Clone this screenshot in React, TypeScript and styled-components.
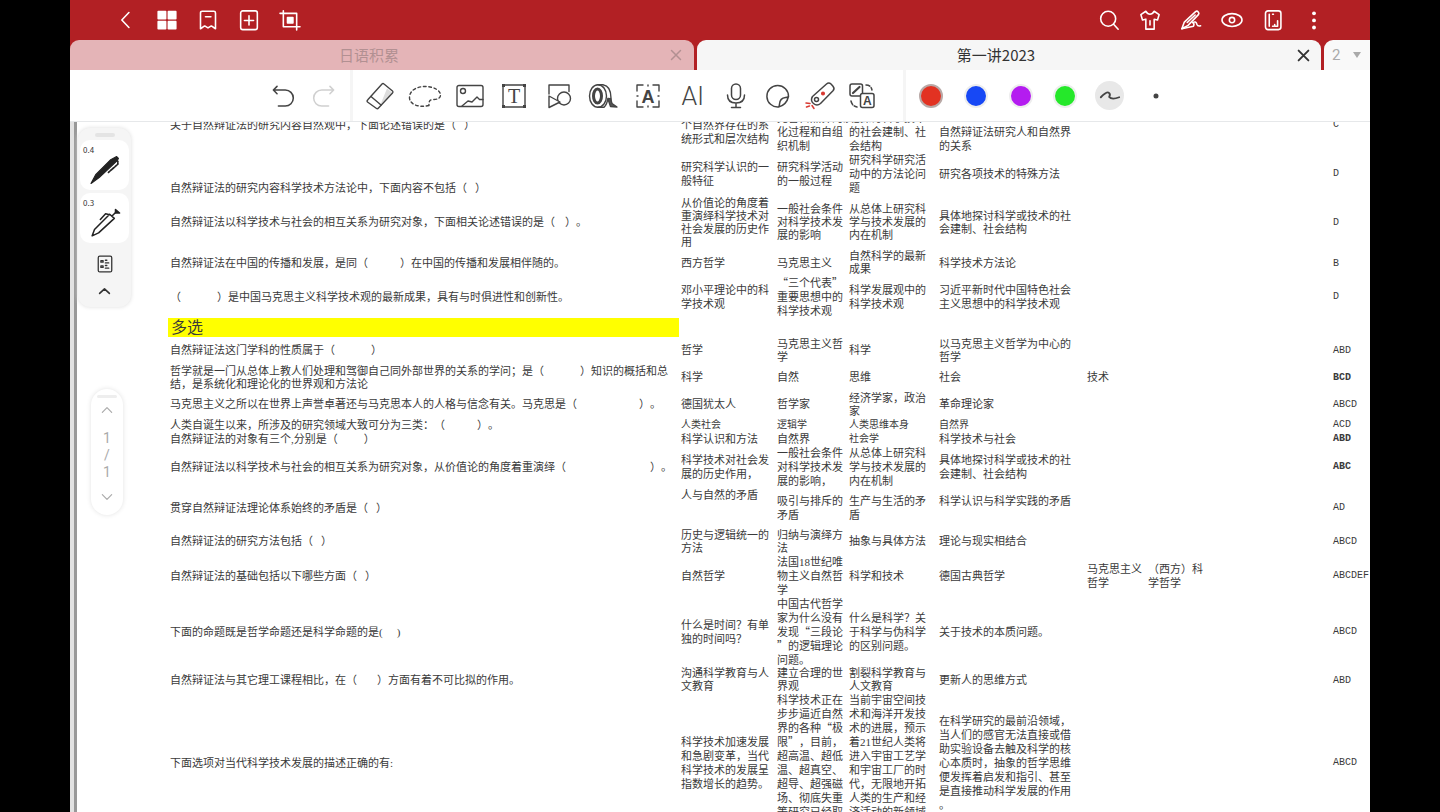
import React from "react";
import styled, { createGlobalStyle, css } from "styled-components";

const GlobalStyle = createGlobalStyle`
  *, *::before, *::after { box-sizing: border-box; }
  body {
    margin: 0;
    background: #000;
    color: #333;
    font-family: "Noto Sans CJK SC", sans-serif;
  }
  button { font: inherit; color: inherit; padding: 0; border: 0; background: none; cursor: pointer; }
  svg { display: block; overflow: visible; }
`;

/* ---------- shell ---------- */

const Shell = styled.div`
  height: 100vh;
  padding: 0 70px;
  display: flex;
  flex-direction: column;
  overflow: hidden;
`;

const IconButton = styled.button`
  display: flex;
  align-items: center;
  justify-content: center;
`;

const TopBar = styled.header`
  flex: none;
  height: 40px;
  padding: 0 36px 1px 35px;
  display: flex;
  justify-content: space-between;
  background: #b22024;
  color: #fff;
`;

const TopGroup = styled.nav`
  display: flex;
  ${IconButton} { width: 41px; }
`;

const TabBar = styled.div`
  flex: none;
  height: 30px;
  display: flex;
  gap: 3px;
  background: #b22024;
`;

const Tab = styled.div<{ $active?: boolean }>`
  flex: 1;
  display: flex;
  align-items: center;
  padding-right: 10px;
  border-radius: 9px 9px 0 0;
  background: ${(p) => (p.$active ? "#f6f6f6" : "#e4b4b7")};
  color: ${(p) => (p.$active ? "#333" : "#b29092")};
  ${IconButton} { width: 16px; height: 30px; }
`;

const TabTitle = styled.button`
  flex: 1;
  font-size: 15px;
  line-height: 30px;
`;

const TabCount = styled.button`
  width: 46px;
  padding: 0 8px;
  display: flex;
  align-items: center;
  justify-content: space-between;
  border-radius: 9px 0 0 0;
  background: #f9f9f9;
  color: #aaa;
  font-size: 15px;
  font-family: Roboto, sans-serif;
`;

const ToolBar = styled.div`
  flex: none;
  height: 52px;
  display: flex;
  background: #fff;
  border-bottom: 1px solid #e6e8ea;
  color: #444;
`;

const ToolSection = styled.div<{ $grow?: boolean }>`
  display: flex;
  padding: 0 20px 0 5px;
  border-left: 3px solid #f5f5f5;
  ${(p) => p.$grow && css`flex: 1; padding: 0 0 0 3px;`}
`;

const History = styled.div`
  width: 280px;
  padding-right: 6px;
  display: flex;
  justify-content: flex-end;
  ${IconButton} { width: 41px; }
`;

const ToolGrid = styled.div<{ $count: number; $width: number }>`
  width: ${(p) => p.$width}px;
  display: grid;
  grid-template-columns: repeat(${(p) => p.$count}, 1fr);
`;

const AiLabel = styled.span`
  padding-top: 3px;
  font-family: Roboto, sans-serif;
  font-weight: 300;
  font-size: 25px;
  line-height: 28px;
`;

const Swatch = styled.span<{ $color: string; $selected?: boolean }>`
  width: 24px;
  height: 24px;
  border-radius: 50%;
  border: 2px solid ${(p) => (p.$selected ? "#b9a9a7" : "#eee")};
  background: ${(p) => p.$color};
`;

const StrokeStyle = styled.span`
  width: 29px;
  height: 29px;
  border-radius: 50%;
  display: flex;
  align-items: center;
  justify-content: center;
  background: #e8e8e8;
`;

/* ---------- document ---------- */

const Viewport = styled.main`
  position: relative;
  flex: 1;
  min-height: 0;
  overflow: hidden;
  display: flex;
  padding-left: 4px;
  background: #e2e2e2;
`;

const Paper = styled.section`
  flex: 1;
  min-width: 0;
  padding-left: 91px;
  border-left: 3px solid #999;
  background: #fff;
`;

const Sheet = styled.table`
  width: 100%;
  margin-top: -11px;
  table-layout: fixed;
  border-collapse: collapse;
  font-family: "Liberation Serif", "Noto Sans CJK SC", serif;
  font-size: 11px;
  color: #3a3a3a;
  text-spacing-trim: space-all;
`;

const Col = styled.col<{ $width?: number }>`
  ${(p) => p.$width && css`width: ${p.$width}px;`}
`;

const Row = styled.tr<{ $height: number; $tight?: boolean }>`
  height: ${(p) => p.$height}px;
  line-height: ${(p) => (p.$tight ? 13 : 14)}px;
`;

type Align = "top" | "middle" | "bottom";

const Cell = styled.td<{ $align?: Align; $small?: boolean }>`
  padding: 0 0 0 2px;
  white-space: pre;
  vertical-align: ${(p) => p.$align ?? "middle"};
  ${(p) => p.$small && css`font-size: 10px;`}
`;

const Answer = styled(Cell)<{ $bold?: boolean }>`
  font-family: "Liberation Mono", monospace;
  font-size: 10px;
  font-weight: ${(p) => (p.$bold ? 700 : 400)};
`;

const SectionTitle = styled.th`
  padding: 0 0 0 3px;
  background: #ff0;
  text-align: left;
  font-size: 16px;
  line-height: 19px;
  font-weight: 400;
`;

const Blank = styled.span<{ $width: number }>`
  display: inline-block;
  width: ${(p) => p.$width}px;
`;

const WideQuote = styled.span`
  font-family: "Noto Sans CJK SC", sans-serif;
  line-height: 10px;
`;

/* ---------- floating panels ---------- */

const PenPanel = styled.aside`
  position: absolute;
  top: 6px;
  left: 8px;
  width: 53px;
  height: 179px;
  padding: 5px 2px 0;
  display: flex;
  flex-direction: column;
  align-items: center;
  gap: 3px;
  border-radius: 12px;
  background: #f5f5f5;
  box-shadow: 0 0 4px #ddd;
`;

const Grip = styled.span`
  flex: none;
  width: 20px;
  height: 4px;
  border-radius: 2px;
  background: #e4e4e4;
`;

const PenCard = styled.button`
  width: 49px;
  height: 50px;
  padding: 4px 3px 0;
  display: flex;
  flex-direction: column;
  border-radius: 10px;
  background: #fff;
  text-align: left;
  svg { align-self: center; }
`;

const PenSize = styled.span`
  font-size: 8px;
  line-height: 12px;
`;

const PanelButton = styled(IconButton)`
  width: 49px;
  height: 24px;
  &:first-of-type { height: 30px; }
`;

const PanelActions = styled.div`
  padding-top: 3px;
  display: flex;
  flex-direction: column;
`;

const PagePanel = styled.aside`
  position: absolute;
  top: 267px;
  left: 21px;
  width: 32px;
  height: 126px;
  padding-top: 6px;
  display: flex;
  flex-direction: column;
  align-items: center;
  border-radius: 16px;
  background: #fff;
  box-shadow: 0 0 5px #e2e2e2;
  color: #aaa;
  ${Grip} { height: 3px; background: #eee; }
  ${IconButton} { width: 32px; height: 24px; }
`;

const PageNumber = styled.span`
  padding: 8px 0 4px;
  font-family: Roboto, sans-serif;
  font-size: 14px;
  line-height: 17px;
  text-align: center;
  white-space: pre;
`;

/* ---------- icons ---------- */

function Icon({ size = 24, w = 2, children }: { size?: number; w?: number; children: React.ReactNode }) {
  return (
    <svg width={size} height={size} viewBox="0 0 24 24" fill="none" stroke="currentColor"
      strokeWidth={w} strokeLinecap="round" strokeLinejoin="round" aria-hidden="true">
      {children}
    </svg>
  );
}

const topLeft: [string, React.ReactNode][] = [
  ["返回", <path d="M15.500 3 7 12l8.500 9" />],
  ["缩略图", <g fill="currentColor" stroke="none"><rect x="0.5" y="1" width="10.800" height="10.500" rx="1" /><rect x="12.700" y="1" width="10.800" height="10.500" rx="1" /><rect x="0.5" y="13" width="10.800" height="10.500" rx="1" /><rect x="12.700" y="13" width="10.800" height="10.500" rx="1" /></g>],
  ["书签", <><path d="M3 22.500V3.500q0-2 2-2h14q2 0 2 2v19l-4.500-3.200h-1L12 21.500l-3.500-2.200h-1z" /><path d="M9 8h6.500" /></>],
  ["新建", <><rect x="2" y="1" width="20" height="22.500" rx="2.500" /><path d="M12 7v11M6.500 12.500h11" /></>],
  ["裁剪", <><path d="M4 1v19h20M0 4h20v20" /><rect x="9" y="9" width="6.500" height="6.500" fill="currentColor" /></>],
];

const topRight: [string, React.ReactNode][] = [
  ["搜索", <><circle cx="11" cy="10.500" r="9" /><path d="m17.500 17 5.500 6" /></>],
  ["主题", <><path d="m7 1.500-6 4 2 6.500 4-1v12h10V11l4 1 2-6.500-6-4q-2 3.500-5 3.500t-5-3.500z" /><path d="M12 13v5" /></>],
  ["批注", <><path d="m1 22.500 3-8L17.500 2q1.700-1.300 3.200.3t.2 3.300L8.500 18.500z" /><path d="m7.500 15 9.500-9M1 22.500l14-3q1.500-3-1-4.500 4-2 5 2 1 3 4.500 2" /></>],
  ["查看", <><ellipse cx="12" cy="12" rx="12" ry="7.700" /><circle cx="12" cy="12" r="3.200" /></>],
  ["书本", <><rect x="3" y="1" width="18.500" height="22.500" rx="3" /><path d="M7.500 5v14.500M11.500 5h1M11.500 19.500h1M17.500 13v6.500H14v-2" /></>],
  ["更多", <g fill="currentColor" stroke="none"><circle cx="12" cy="4" r="2.300" /><circle cx="12" cy="12.500" r="2.300" /><circle cx="12" cy="21" r="2.300" /></g>],
];

const letter = { fill: "currentColor", stroke: "none", textAnchor: "middle" as const };

const mainTools: [string, React.ReactNode][] = [
  ["橡皮擦", <><path d="m12.500 20.500 11.500-12-5-4z" fill="#ddd" stroke="none" /><path d="m0 15.500 14-15.500q1-1 2 0l8.500 7q1 1 0 2L10.500 24q-1 1.200-2.300.2L-.5 18q-1-1 .5-2.500z" /><path d="m3 12.500 10 8.500" /></>],
  ["套索", <path strokeDasharray="2.700 2.700" d="M16 21.500C5 24-4 20-3.500 13-3 5 6 2.500 12 2.500c9 0 15.500 4 15.500 8.500 0 3-3 4.500-6.500 4.500s-5.500 1-5 6z" />],
  ["图片", <><rect x="-1" y="1.500" width="26" height="21" rx="2" /><circle cx="5" cy="7" r="2.500" /><path d="m4 22 6-5 4 1 5-5 2.500 2.500H25" /></>],
  ["文本", <><rect x="1" y="1" width="22" height="22" /><text x="12" y="18.500" {...letter} fontFamily="Liberation Serif" fontSize="20">T</text><g fill="currentColor" stroke="none"><rect x="0" y="0" width="3" height="3" /><rect x="21" y="0" width="3" height="3" /><rect x="0" y="21" width="3" height="3" /><rect x="21" y="21" width="3" height="3" /></g></>],
  ["形状", <><path d="M2 10V1h20v6.500" /><circle cx="17" cy="14.500" r="6.500" fill="#fff" /><path d="M2 12v11.500L13 18z" fill="#fff" /></>],
  ["胶带", <><ellipse cx="7" cy="12" rx="8.500" ry="11.300" /><ellipse cx="6.500" cy="12" rx="4" ry="7" strokeWidth="3" /><path d="M7 .7h5Q20 2 20 14v4M7 23.300h6q3-3 4-9" /><path d="m17 15 2.500 7.500L26 23l-5-3.500-1.500-5z" fill="#555" /></>],
  ["识别", <><path d="M1 7V1h6M17 1h6v6M23 17v6h-6M7 23H1v-6M1 12h1M22 12h1M12 1v1M12 22v1" /><text x="12" y="18.500" {...letter} fontFamily="Liberation Sans" fontWeight="700" fontSize="18">A</text></>],
  ["AI", null],
];

const extraTools: [string, React.ReactNode][] = [
  ["录音", <><rect x="7.500" y="0" width="9" height="15.500" rx="4.500" /><path d="M3.500 11q0 8 8.500 8t8.500-8M12 19v4.500M7.500 23.500h9" /></>],
  ["贴纸", <><path d="M22.500 12.500A10.800 10.800 0 1 0 12.500 23q1-1 1-3 .5-6 6-6.500 2 0 3-1zM12.500 23q8-2 10-10.500" /></>],
  ["激光笔", <><path d="m4.500 12.500 14-12.500q2.300-2 4.500 0l2 2.300q2 2.300 0 4.500L12.500 19.500q-3.500 3-7 0t-1-7z" /><circle cx="8.500" cy="15.500" r="2" /><circle cx="15" cy="9.500" r="1.300" fill="#d93a32" stroke="#d93a32" /><path d="m-2 19 4 .5M-1.500 23l3-1M4 21.500l2 3" stroke="#d93a32" /></>],
  ["翻译", <><rect x="0" y="0" width="12.500" height="12" rx="2" /><path d="m3 9 6.500-6" strokeWidth="2.200" /><rect x="10.500" y="9.500" width="13.500" height="14" rx="2" fill="#fff" /><text x="17.300" y="20.800" {...letter} fontFamily="Liberation Sans" fontWeight="700" fontSize="12">A</text><path d="M16 1q5 0 6 5M1 17q1 5 6 6" strokeDasharray="4 2" /></>],
];

/* ---------- data ---------- */

type Option = { t: string; align?: Align; small?: boolean };
interface Question { h: number; tight?: boolean; q: string; qAlign?: Align; o: (string | Option)[]; a: string; bold?: boolean }

/* [n] inside a question is an n-pixel fill-in blank. */
const single: Question[] = [
  { h: 42, q: "关于自然辩证法的研究内容自然观中，下面论述错误的是（[8]）\n ", a: "C\n ", o: ["个自然界存在的系\n统形式和层次结构", "完善自然界的演\n化过程和自组\n织机制", "地探讨科学技术\n的社会建制、社\n会结构", { t: "自然辩证法研究人和自然界\n的关系", align: "bottom" }] },
  { h: 42, q: "自然辩证法的研究内容科学技术方法论中，下面内容不包括（[8]）", qAlign: "bottom", a: "D", o: ["研究科学认识的一\n般特征", "研究科学活动\n的一般过程", "研究科学研究活\n动中的方法论问\n题", "研究各项技术的特殊方法"] },
  { h: 55, tight: true, q: "自然辩证法以科学技术与社会的相互关系为研究对象，下面相关论述错误的是（[10]）。", a: "D", o: ["从价值论的角度着\n重演绎科学技术对\n社会发展的历史作\n用", "一般社会条件\n对科学技术发\n展的影响", "从总体上研究科\n学与技术发展的\n内在机制", "具体地探讨科学或技术的社\n会建制、社会结构"] },
  { h: 26, tight: true, q: "自然辩证法在中国的传播和发展，是同（[32]）在中国的传播和发展相伴随的。", a: "B", o: ["西方哲学", "马克思主义", "自然科学的最新\n成果", "科学技术方法论"] },
  { h: 42, q: "（[36]）是中国马克思主义科学技术观的最新成果，具有与时俱进性和创新性。", a: "D", o: ["邓小平理论中的科\n学技术观", "“三个代表”\n重要思想中的\n科学技术观", "科学发展观中的\n科学技术观", "习近平新时代中国特色社会\n主义思想中的科学技术观"] },
];

const multiple: Question[] = [
  { h: 27, tight: true, q: "自然辩证法这门学科的性质属于（[36]）", a: "ABD", o: ["哲学", "马克思主义哲\n学", "科学", "以马克思主义哲学为中心的\n哲学"] },
  { h: 27, tight: true, q: "哲学就是一门从总体上教人们处理和驾御自己同外部世界的关系的学问；是（[36]）知识的概括和总\n结，是系统化和理论化的世界观和方法论", a: "BCD", bold: true, o: ["科学", "自然", "思维", "社会", "技术"] },
  { h: 27, tight: true, q: "马克思主义之所以在世界上声誉卓著还与马克思本人的人格与信念有关。马克思是（[62]）。", a: "ABCD", o: ["德国犹太人", "哲学家", "经济学家，政治\n家", "革命理论家"] },
  { h: 14, q: "人类自诞生以来，所涉及的研究领域大致可分为三类：（[32]）。", a: "ACD", o: ["人类社会", "逻辑学", "人类思维本身", "自然界"].map((t) => ({ t, small: true })) },
  { h: 14, q: "自然辩证法的对象有三个,分别是（[26]）", a: "ABD", bold: true, o: ["科学认识和方法", "自然界", { t: "社会学", small: true }, "科学技术与社会"] },
  { h: 42, q: "自然辩证法以科学技术与社会的相互关系为研究对象，从价值论的角度着重演绎（[84]）。", a: "ABC", bold: true, o: ["科学技术对社会发\n展的历史作用，", "一般社会条件\n对科学技术发\n展的影响，", "从总体上研究科\n学与技术发展的\n内在机制", "具体地探讨科学或技术的社\n会建制、社会结构"] },
  { h: 40, q: "贯穿自然辩证法理论体系始终的矛盾是（[8]）", a: "AD", o: [{ t: "人与自然的矛盾", align: "top" }, "吸引与排斥的\n矛盾", "生产与生活的矛\n盾", "科学认识与科学实践的矛盾\n "] },
  { h: 27, tight: true, q: "自然辩证法的研究方法包括（[8]）", a: "ABCD", o: ["历史与逻辑统一的\n方法", "归纳与演绎方\n法", "抽象与具体方法", "理论与现实相结合"] },
  { h: 42, q: "自然辩证法的基础包括以下哪些方面（[8]）", a: "ABCDEF", o: ["自然哲学", "法国18世纪唯\n物主义自然哲\n学", "科学和技术", "德国古典哲学", "马克思主义\n哲学", "（西方）科\n学哲学"] },
  { h: 70, q: "下面的命题既是哲学命题还是科学命题的是([14])", a: "ABCD", o: ["什么是时间？有单\n独的时间吗？", "中国古代哲学\n家为什么没有\n发现“三段论\n”的逻辑理论\n问题。", "什么是科学？关\n于科学与伪科学\n的区别问题。", "关于技术的本质问题。"] },
  { h: 26, tight: true, q: "自然辩证法与其它理工课程相比，在（[20]）方面有着不可比拟的作用。", a: "ABD", o: ["沟通科学教育与人\n文教育", "建立合理的世\n界观", "割裂科学教育与\n人文教育", "更新人的思维方式"] },
  { h: 140, q: "下面选项对当代科学技术发展的描述正确的有:", a: "ABCD", o: ["科学技术加速发展\n和急剧变革，当代\n科学技术的发展呈\n指数增长的趋势。", "科学技术正在\n步步逼近自然\n界的各种“极\n限”，目前，\n超高温、超低\n温、超真空、\n超导、超强磁\n场、彻底失重\n等研究已经取\n得重大进展。", "当前宇宙空间技\n术和海洋开发技\n术的进展，预示\n着21世纪人类将\n进入宇宙工艺学\n和宇宙工厂的时\n代，无限地开拓\n人类的生产和经\n济活动的新领域\n。", "在科学研究的最前沿领域，\n当人们的感官无法直接或借\n助实验设备去触及科学的核\n心本质时，抽象的哲学思维\n便发挥着启发和指引、甚至\n是直接推动科学发展的作用\n。"] },
];

function renderText(text: string) {
  return text.split(/(\[\d+\]|[“”])/).map((part, i) => {
    if (part === "“" || part === "”") return <WideQuote key={i}>{part}</WideQuote>;
    if (part.startsWith("[")) return <Blank key={i} $width={parseInt(part.slice(1), 10)} />;
    return part;
  });
}

function QuestionRow({ item }: { item: Question }) {
  const options: Option[] = Array.from({ length: 6 }, (_, i) => {
    const o = item.o[i] ?? "";
    return typeof o === "string" ? { t: o } : o;
  });
  return (
    <Row $height={item.h} $tight={item.tight}>
      <Cell $align={item.qAlign}>{renderText(item.q)}</Cell>
      {options.map((o, i) => <Cell key={i} $align={o.align} $small={o.small}>{renderText(o.t)}</Cell>)}
      <Answer $bold={item.bold}>{item.a}</Answer>
    </Row>
  );
}

const colors = ["#e23222", "#1748f5", "#b41cf0", "#25e82a"];
const colorNames = ["红色", "蓝色", "紫色", "绿色"];

export default function App() {
  return (
    <Shell lang="zh-CN">
      <GlobalStyle />
      <TopBar>
        <TopGroup>
          {topLeft.map(([name, art]) => <IconButton key={name} aria-label={name}><Icon size={20} w={1.9}>{art}</Icon></IconButton>)}
        </TopGroup>
        <TopGroup>
          {topRight.map(([name, art]) => <IconButton key={name} aria-label={name}><Icon size={20} w={1.9}>{art}</Icon></IconButton>)}
        </TopGroup>
      </TopBar>

      <TabBar>
        <Tab>
          <TabTitle>日语积累</TabTitle>
          <IconButton aria-label="关闭"><Icon size={12} w={3}><path d="m3 3 18 18M21 3 3 21" /></Icon></IconButton>
        </Tab>
        <Tab $active>
          <TabTitle>第一讲2023</TabTitle>
          <IconButton aria-label="关闭"><Icon size={13} w={3.5}><path d="m3 3 18 18M21 3 3 21" /></Icon></IconButton>
        </Tab>
        <TabCount>
          2
          <svg width="10" height="8" viewBox="0 0 10 8" fill="currentColor" aria-hidden="true"><path d="M1 1h8L5 7z" /></svg>
        </TabCount>
      </TabBar>

      <ToolBar>
        <History>
          <IconButton aria-label="撤销"><Icon size={22} w={1.7}><path d="M5.500 1.500 1.500 5.500l4 4M2 5.500h12.500a8.700 8.700 0 0 1 0 17.500H7" /></Icon></IconButton>
          <IconButton aria-label="重做" disabled>
            <Icon size={22} w={1.7}><path stroke="#d0d0d0" d="m18.500 1.500 4 4-4 4M22 5.500H9.500a8.700 8.700 0 0 0 0 17.500H17" /></Icon>
          </IconButton>
        </History>
        <ToolSection>
          <ToolGrid $count={8} $width={357}>
            {mainTools.map(([name, art]) => (
              <IconButton key={name} aria-label={name}>
                {art ? <Icon w={1.4}>{art}</Icon> : <AiLabel>AI</AiLabel>}
              </IconButton>
            ))}
          </ToolGrid>
          <ToolGrid $count={4} $width={168}>
            {extraTools.map(([name, art]) => <IconButton key={name} aria-label={name}><Icon w={1.5}>{art}</Icon></IconButton>)}
          </ToolGrid>
        </ToolSection>
        <ToolSection $grow>
          <ToolGrid $count={6} $width={268}>
            {colors.map((c, i) => <IconButton key={c} aria-label={colorNames[i]}><Swatch $color={c} $selected={i === 0} /></IconButton>)}
            <IconButton aria-label="线型">
              <StrokeStyle><Icon size={20} w={2.2}><path d="M1 13.500Q8 6.500 10.500 8t.5 5q3 4 12 .5" /></Icon></StrokeStyle>
            </IconButton>
            <IconButton aria-label="粗细"><Icon><circle cx="13" cy="12" r="1.500" fill="currentColor" /></Icon></IconButton>
          </ToolGrid>
        </ToolSection>
      </ToolBar>

      <Viewport>
        <Paper>
          <Sheet>
            <colgroup>
              <Col $width={511} /><Col $width={96} /><Col $width={72} /><Col $width={90} />
              <Col $width={148} /><Col $width={61} /><Col /><Col $width={39} />
            </colgroup>
            <tbody>
              {single.map((item, i) => <QuestionRow key={i} item={item} />)}
              <Row $height={19}>
                <SectionTitle scope="rowgroup">多选</SectionTitle>
                <Cell colSpan={7} />
              </Row>
              {multiple.map((item, i) => <QuestionRow key={i} item={item} />)}
            </tbody>
          </Sheet>
        </Paper>

        <PenPanel>
          <Grip />
          <PenCard aria-label="钢笔 0.4">
            <PenSize>0.4</PenSize>
            <Icon size={28} w={1}><path d="m0 23.500 4-7.500L16.500 3.500 22 .5l1.500 1.500-1 2L7 18.500z" fill="#222" stroke="#222" /><path d="m15 14 8-7V4.500" stroke="#222" strokeDasharray="1.500 1" strokeWidth="1.500" /></Icon>
          </PenCard>
          <PenCard aria-label="圆珠笔 0.3">
            <PenSize>0.3</PenSize>
            <Icon size={28} w={1.3}><path d="m1 23 2-5.500L16 4.500 20 8 6.500 20.500zM18 6l3.500-3.500M8 9l4.500-5 3.500 1" stroke="#222" /><path d="m21 .5 3.500 3-3.500 0z" fill="#222" stroke="#222" /></Icon>
          </PenCard>
          <PanelActions>
            <PanelButton aria-label="工具列表">
              <Icon size={18} w={1.7}><rect x="3" y="1.500" width="18" height="21" rx="2" /><path d="M6.500 7.500h3v2h-3zM12.500 10.500H17M12.500 7h2M6.500 14.500h3v2h-3zM12.500 17.500H17M12.500 14h2" /></Icon>
            </PanelButton>
            <PanelButton aria-label="收起"><Icon size={13} w={3}><path d="m3 15.500 9-8.500 9 8.500" /></Icon></PanelButton>
          </PanelActions>
        </PenPanel>

        <PagePanel>
          <Grip />
          <IconButton aria-label="上一页"><Icon size={14}><path d="m4 16 8-8 8 8" /></Icon></IconButton>
          <PageNumber>{"1\n/\n1"}</PageNumber>
          <IconButton aria-label="下一页"><Icon size={14}><path d="m4 8 8 8 8-8" /></Icon></IconButton>
        </PagePanel>
      </Viewport>
    </Shell>
  );
}
